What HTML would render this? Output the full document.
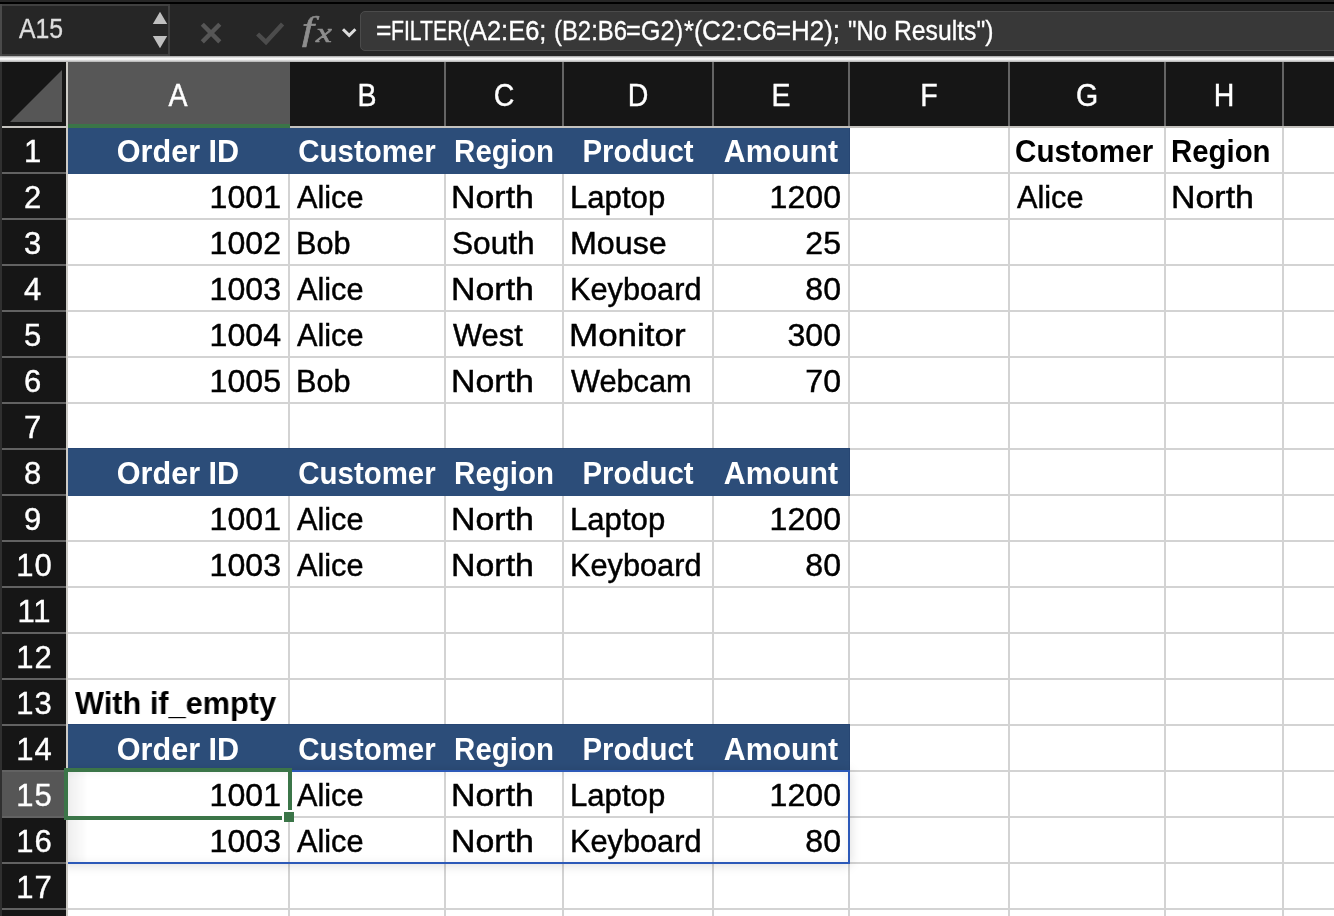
<!DOCTYPE html>
<html lang="en"><head><meta charset="utf-8"><title>FILTER</title>
<style>
html,body{margin:0;padding:0;}
body{width:1334px;height:916px;overflow:hidden;background:#fff;position:relative;font-family:"Liberation Sans",sans-serif;}
.abs{position:absolute;}
#wrap{position:absolute;left:0;top:0;width:1334px;height:916px;will-change:transform;overflow:hidden;}
#top{left:0;top:0;width:1334px;height:62px;background:#262626;}
#topblack{left:0;top:2px;width:1334px;height:2px;background:#000;}
#namebox{left:0px;top:4px;width:166px;height:48px;border:2px solid #404040;border-left-color:#4a4a4a;background:#262626;box-sizing:content-box;}
#nametext{left:19px;top:12.5px;font-size:27.5px;line-height:32px;color:#dedede;white-space:nowrap;-webkit-text-stroke:.35px #dedede;transform:scaleX(.90);transform-origin:0 0;}
#fbox{left:360px;top:11px;width:990px;height:38px;border:1px solid #4b4b4b;border-radius:5px;background:#383838;}
#ftext{left:376px;top:15px;font-size:27.5px;line-height:32px;color:#fff;white-space:nowrap;-webkit-text-stroke:.35px #fff;}
.fs{position:absolute;top:0;white-space:pre;transform-origin:0 0;}
#fx{left:301px;top:9px;font-family:"Liberation Serif",serif;font-style:italic;font-size:34px;line-height:40px;color:#8e8e8e;white-space:nowrap;-webkit-text-stroke:.6px #8e8e8e;}
#sep{left:0;top:56px;width:1334px;height:6px;background:linear-gradient(#9c9c9c 0%,#d6d6d6 20%,#fafafa 42%,#f2f2f2 58%,#cecece 80%,#b0b0b0 100%);}
#hdr{left:0;top:62px;width:1334px;height:66px;background:#161616;}
#rowhdr{left:0;top:62px;width:66px;height:854px;background:#161616;}
#leftedge{left:0;top:4px;width:2px;height:52px;background:#4a4a4a;}
#leftedge2{left:0;top:62px;width:2px;height:854px;background:#303030;}
.ch{-webkit-text-stroke:.4px #fff;transform:scaleX(.92);top:62px;height:62px;color:#fff;font-size:31px;line-height:67px;text-align:center;white-space:nowrap;}
.rh{-webkit-text-stroke:.4px #fff;left:1px;width:63px;height:46px;color:#fff;font-size:31px;line-height:48px;text-align:center;white-space:nowrap;}
.vl{top:128px;width:2px;height:788px;background:#d3d3d3;}
.hl{left:68px;width:1266px;height:2px;background:#d3d3d3;}
.hvl{top:62px;width:2px;height:64px;background:#646464;}
.rhl{left:0;width:66px;height:2px;background:#626262;}
.blue{background:#2c4d79;left:68px;width:782px;height:48px;box-shadow:inset -1px 1px 0 #274673;}
.c{-webkit-text-stroke:.45px #000;height:46px;line-height:48px;font-size:31px;color:#000;white-space:nowrap;}
.c.r{text-align:right;}
.c.h{-webkit-text-stroke:0;color:#fff;font-weight:bold;font-size:32px;line-height:46px;text-align:center;transform:scaleX(.92);}
.c.b{-webkit-text-stroke:0;font-weight:bold;font-size:32px;line-height:46px;transform-origin:0 0;}
</style></head><body><div id="wrap">

<div class="abs hl" style="top:126px"></div>
<div class="abs hl" style="top:172px"></div>
<div class="abs hl" style="top:218px"></div>
<div class="abs hl" style="top:264px"></div>
<div class="abs hl" style="top:310px"></div>
<div class="abs hl" style="top:356px"></div>
<div class="abs hl" style="top:402px"></div>
<div class="abs hl" style="top:448px"></div>
<div class="abs hl" style="top:494px"></div>
<div class="abs hl" style="top:540px"></div>
<div class="abs hl" style="top:586px"></div>
<div class="abs hl" style="top:632px"></div>
<div class="abs hl" style="top:678px"></div>
<div class="abs hl" style="top:724px"></div>
<div class="abs hl" style="top:770px"></div>
<div class="abs hl" style="top:816px"></div>
<div class="abs hl" style="top:862px"></div>
<div class="abs hl" style="top:908px"></div>
<div class="abs vl" style="left:288px"></div>
<div class="abs vl" style="left:444px"></div>
<div class="abs vl" style="left:562px"></div>
<div class="abs vl" style="left:712px"></div>
<div class="abs vl" style="left:848px"></div>
<div class="abs vl" style="left:1008px"></div>
<div class="abs vl" style="left:1164px"></div>
<div class="abs vl" style="left:1282px"></div>
<div class="abs blue" style="top:126px"></div>
<div class="abs c h" style="left:68px;width:220px;top:128px;transform:scaleX(0.956)">Order ID</div>
<div class="abs c h" style="left:290px;width:154px;top:128px;transform:scaleX(0.92)">Customer</div>
<div class="abs c h" style="left:446px;width:116px;top:128px;transform:scaleX(0.92)">Region</div>
<div class="abs c h" style="left:564px;width:148px;top:128px;transform:scaleX(0.92)">Product</div>
<div class="abs c h" style="left:714px;width:134px;top:128px;transform:scaleX(0.946)">Amount</div>
<div class="abs blue" style="top:448px"></div>
<div class="abs c h" style="left:68px;width:220px;top:450px;transform:scaleX(0.956)">Order ID</div>
<div class="abs c h" style="left:290px;width:154px;top:450px;transform:scaleX(0.92)">Customer</div>
<div class="abs c h" style="left:446px;width:116px;top:450px;transform:scaleX(0.92)">Region</div>
<div class="abs c h" style="left:564px;width:148px;top:450px;transform:scaleX(0.92)">Product</div>
<div class="abs c h" style="left:714px;width:134px;top:450px;transform:scaleX(0.946)">Amount</div>
<div class="abs blue" style="top:724px"></div>
<div class="abs c h" style="left:68px;width:220px;top:726px;transform:scaleX(0.956)">Order ID</div>
<div class="abs c h" style="left:290px;width:154px;top:726px;transform:scaleX(0.92)">Customer</div>
<div class="abs c h" style="left:446px;width:116px;top:726px;transform:scaleX(0.92)">Region</div>
<div class="abs c h" style="left:564px;width:148px;top:726px;transform:scaleX(0.92)">Product</div>
<div class="abs c h" style="left:714px;width:134px;top:726px;transform:scaleX(0.946)">Amount</div>
<div class="abs c r" style="left:68px;width:213px;top:174px;transform:scaleX(1.035);transform-origin:100% 0">1001</div>
<div class="abs c" style="left:296.6px;top:174px;transform:scaleX(0.989);transform-origin:0 0">Alice</div>
<div class="abs c" style="left:451.2px;top:174px;transform:scaleX(1.094);transform-origin:0 0">North</div>
<div class="abs c" style="left:570.3px;top:174px;transform:scaleX(1.004);transform-origin:0 0">Laptop</div>
<div class="abs c r" style="left:714px;width:127px;top:174px;transform:scaleX(1.035);transform-origin:100% 0">1200</div>
<div class="abs c r" style="left:68px;width:213px;top:220px;transform:scaleX(1.035);transform-origin:100% 0">1002</div>
<div class="abs c" style="left:295.5px;top:220px;transform:scaleX(0.988);transform-origin:0 0">Bob</div>
<div class="abs c" style="left:451.6px;top:220px;transform:scaleX(1.021);transform-origin:0 0">South</div>
<div class="abs c" style="left:570.2px;top:220px;transform:scaleX(1.040);transform-origin:0 0">Mouse</div>
<div class="abs c r" style="left:714px;width:127px;top:220px;transform:scaleX(1.035);transform-origin:100% 0">25</div>
<div class="abs c r" style="left:68px;width:213px;top:266px;transform:scaleX(1.035);transform-origin:100% 0">1003</div>
<div class="abs c" style="left:296.6px;top:266px;transform:scaleX(0.989);transform-origin:0 0">Alice</div>
<div class="abs c" style="left:451.2px;top:266px;transform:scaleX(1.094);transform-origin:0 0">North</div>
<div class="abs c" style="left:570.3px;top:266px;transform:scaleX(0.991);transform-origin:0 0">Keyboard</div>
<div class="abs c r" style="left:714px;width:127px;top:266px;transform:scaleX(1.035);transform-origin:100% 0">80</div>
<div class="abs c r" style="left:68px;width:213px;top:312px;transform:scaleX(1.035);transform-origin:100% 0">1004</div>
<div class="abs c" style="left:296.6px;top:312px;transform:scaleX(0.989);transform-origin:0 0">Alice</div>
<div class="abs c" style="left:453.0px;top:312px;transform:scaleX(0.996);transform-origin:0 0">West</div>
<div class="abs c" style="left:568.9px;top:312px;transform:scaleX(1.129);transform-origin:0 0">Monitor</div>
<div class="abs c r" style="left:714px;width:127px;top:312px;transform:scaleX(1.035);transform-origin:100% 0">300</div>
<div class="abs c r" style="left:68px;width:213px;top:358px;transform:scaleX(1.035);transform-origin:100% 0">1005</div>
<div class="abs c" style="left:295.5px;top:358px;transform:scaleX(0.988);transform-origin:0 0">Bob</div>
<div class="abs c" style="left:451.2px;top:358px;transform:scaleX(1.094);transform-origin:0 0">North</div>
<div class="abs c" style="left:571.2px;top:358px;transform:scaleX(0.991);transform-origin:0 0">Webcam</div>
<div class="abs c r" style="left:714px;width:127px;top:358px;transform:scaleX(1.035);transform-origin:100% 0">70</div>
<div class="abs c r" style="left:68px;width:213px;top:496px;transform:scaleX(1.035);transform-origin:100% 0">1001</div>
<div class="abs c" style="left:296.6px;top:496px;transform:scaleX(0.989);transform-origin:0 0">Alice</div>
<div class="abs c" style="left:451.2px;top:496px;transform:scaleX(1.094);transform-origin:0 0">North</div>
<div class="abs c" style="left:570.3px;top:496px;transform:scaleX(1.004);transform-origin:0 0">Laptop</div>
<div class="abs c r" style="left:714px;width:127px;top:496px;transform:scaleX(1.035);transform-origin:100% 0">1200</div>
<div class="abs c r" style="left:68px;width:213px;top:542px;transform:scaleX(1.035);transform-origin:100% 0">1003</div>
<div class="abs c" style="left:296.6px;top:542px;transform:scaleX(0.989);transform-origin:0 0">Alice</div>
<div class="abs c" style="left:451.2px;top:542px;transform:scaleX(1.094);transform-origin:0 0">North</div>
<div class="abs c" style="left:570.3px;top:542px;transform:scaleX(0.991);transform-origin:0 0">Keyboard</div>
<div class="abs c r" style="left:714px;width:127px;top:542px;transform:scaleX(1.035);transform-origin:100% 0">80</div>
<div class="abs c r" style="left:68px;width:213px;top:772px;transform:scaleX(1.035);transform-origin:100% 0">1001</div>
<div class="abs c" style="left:296.6px;top:772px;transform:scaleX(0.989);transform-origin:0 0">Alice</div>
<div class="abs c" style="left:451.2px;top:772px;transform:scaleX(1.094);transform-origin:0 0">North</div>
<div class="abs c" style="left:570.3px;top:772px;transform:scaleX(1.004);transform-origin:0 0">Laptop</div>
<div class="abs c r" style="left:714px;width:127px;top:772px;transform:scaleX(1.035);transform-origin:100% 0">1200</div>
<div class="abs c r" style="left:68px;width:213px;top:818px;transform:scaleX(1.035);transform-origin:100% 0">1003</div>
<div class="abs c" style="left:296.6px;top:818px;transform:scaleX(0.989);transform-origin:0 0">Alice</div>
<div class="abs c" style="left:451.2px;top:818px;transform:scaleX(1.094);transform-origin:0 0">North</div>
<div class="abs c" style="left:570.3px;top:818px;transform:scaleX(0.991);transform-origin:0 0">Keyboard</div>
<div class="abs c r" style="left:714px;width:127px;top:818px;transform:scaleX(1.035);transform-origin:100% 0">80</div>
<div class="abs c" style="left:1016.6px;top:174px;transform:scaleX(0.989);transform-origin:0 0">Alice</div>
<div class="abs c" style="left:1171.2px;top:174px;transform:scaleX(1.094);transform-origin:0 0">North</div>
<div class="abs c b" style="left:1015.4px;top:128px;transform:scaleX(0.925)">Customer</div>
<div class="abs c b" style="left:1171.0px;top:128px;transform:scaleX(0.918)">Region</div>
<div class="abs c b" style="left:75.3px;top:680px;transform:scaleX(0.960)">With if_empty</div>
<div class="abs" style="left:30px;top:770px;width:816px;height:90px;border:2px solid #2c59b8;box-shadow:0 1px 11px rgba(0,0,0,.15), inset 0 0 10px rgba(0,0,0,.06);box-sizing:content-box"></div>
<div class="abs" style="left:68px;top:772px;width:20px;height:90px;background:linear-gradient(to right,rgba(0,0,0,.065),rgba(0,0,0,0))"></div>
<div class="abs" style="left:64px;top:768px;width:220px;height:44px;border:4px solid #3b7548;box-sizing:content-box"></div>
<div class="abs" style="left:282px;top:810px;width:12px;height:12px;background:#fff"></div>
<div class="abs" style="left:288px;top:816px;width:2px;height:6px;background:#d3d3d3"></div>
<div class="abs" style="left:290px;top:816px;width:4px;height:2px;background:#d3d3d3"></div>
<div class="abs" style="left:284px;top:812px;width:10px;height:10px;background:#3b7548"></div>
<div class="abs" id="hdr"></div><div class="abs" id="rowhdr"></div>
<div class="abs" style="left:68px;top:62px;width:222px;height:62px;background:#575757"></div>
<div class="abs" style="left:0px;top:126px;width:1334px;height:2px;background:#c4c2be"></div>
<div class="abs" style="left:68px;top:124px;width:222px;height:4px;background:#3b7548"></div>
<div class="abs ch" style="left:68px;width:220px">A</div>
<div class="abs ch" style="left:290px;width:154px">B</div>
<div class="abs ch" style="left:446px;width:116px">C</div>
<div class="abs ch" style="left:564px;width:148px">D</div>
<div class="abs ch" style="left:714px;width:134px">E</div>
<div class="abs ch" style="left:850px;width:158px">F</div>
<div class="abs ch" style="left:1010px;width:154px">G</div>
<div class="abs ch" style="left:1166px;width:116px">H</div>
<div class="abs hvl" style="left:444px"></div>
<div class="abs hvl" style="left:562px"></div>
<div class="abs hvl" style="left:712px"></div>
<div class="abs hvl" style="left:848px"></div>
<div class="abs hvl" style="left:1008px"></div>
<div class="abs hvl" style="left:1164px"></div>
<div class="abs hvl" style="left:1282px"></div>
<div class="abs" style="left:2px;top:770px;width:62px;height:48px;background:#565656"></div>
<div class="abs rh" style="top:128px">1</div>
<div class="abs rhl" style="top:172px"></div>
<div class="abs rh" style="top:174px">2</div>
<div class="abs rhl" style="top:218px"></div>
<div class="abs rh" style="top:220px">3</div>
<div class="abs rhl" style="top:264px"></div>
<div class="abs rh" style="top:266px">4</div>
<div class="abs rhl" style="top:310px"></div>
<div class="abs rh" style="top:312px">5</div>
<div class="abs rhl" style="top:356px"></div>
<div class="abs rh" style="top:358px">6</div>
<div class="abs rhl" style="top:402px"></div>
<div class="abs rh" style="top:404px">7</div>
<div class="abs rhl" style="top:448px"></div>
<div class="abs rh" style="top:450px">8</div>
<div class="abs rhl" style="top:494px"></div>
<div class="abs rh" style="top:496px">9</div>
<div class="abs rhl" style="top:540px"></div>
<div class="abs rh" style="top:542px;left:3px;letter-spacing:1px">10</div>
<div class="abs rhl" style="top:586px"></div>
<div class="abs rh" style="top:588px;left:3px;letter-spacing:1px">11</div>
<div class="abs rhl" style="top:632px"></div>
<div class="abs rh" style="top:634px;left:3px;letter-spacing:1px">12</div>
<div class="abs rhl" style="top:678px"></div>
<div class="abs rh" style="top:680px;left:3px;letter-spacing:1px">13</div>
<div class="abs rhl" style="top:724px"></div>
<div class="abs rh" style="top:726px;left:3px;letter-spacing:1px">14</div>
<div class="abs rhl" style="top:770px"></div>
<div class="abs rh" style="top:772px;left:3px;letter-spacing:1px">15</div>
<div class="abs rhl" style="top:816px"></div>
<div class="abs rh" style="top:818px;left:3px;letter-spacing:1px">16</div>
<div class="abs rhl" style="top:862px"></div>
<div class="abs rh" style="top:864px;left:3px;letter-spacing:1px">17</div>
<div class="abs rhl" style="top:908px"></div>
<div class="abs rh" style="top:910px;left:3px;letter-spacing:1px">18</div>
<div class="abs" style="left:66px;top:62px;width:2px;height:854px;background:#cdcbc6"></div>
<svg class="abs" style="left:0;top:62px" width="66" height="66"><polygon points="62,8 62,60 10,60" fill="#565656"/></svg>
<div class="abs" id="top"></div><div class="abs" id="topblack"></div>
<div class="abs" id="namebox"></div><div class="abs" id="nametext">A15</div>
<svg class="abs" style="left:150px;top:8px" width="20" height="44"><polygon points="10,3.8 17.2,16 2.8,16" fill="#c0c0c0"/><polygon points="2.8,28.1 17.2,28.1 10,40.2" fill="#c0c0c0"/></svg>
<svg class="abs" style="left:195px;top:18px" width="100" height="30"><path d="M7.3 6.3 L24.8 23.9 M24.8 6.3 L7.3 23.9" stroke="#565656" stroke-width="4.4" fill="none" stroke-linecap="butt"/><path d="M62.6 16 L71 24 L87.6 6" stroke="#4c4c4c" stroke-width="4.4" fill="none"/></svg>
<div class="abs" id="fx"><span style="position:absolute;left:1px;top:0px;font-size:33.5px;transform:scaleX(1.3);transform-origin:0 0">f</span><span style="position:absolute;left:15px;top:4px;font-size:27.5px;transform:scaleX(1.3);transform-origin:0 0">x</span></div>
<svg class="abs" style="left:338px;top:24px" width="22" height="18"><path d="M5 5.3 L11.2 11.4 L17.4 5.3" stroke="#dcdcdc" stroke-width="3" fill="none"/></svg>
<div class="abs" id="fbox"></div>
<div class="abs" id="ftext">
<span class="fs" style="left:-0.1px;transform:scaleX(0.959)">=</span>
<span class="fs" style="left:15.3px;transform:scaleX(0.772)">FILTER(</span>
<span class="fs" style="left:94.4px;transform:scaleX(0.925)">A2:E6; </span>
<span class="fs" style="left:177.8px;transform:scaleX(0.868)">(B2:B6</span>
<span class="fs" style="left:250.3px;transform:scaleX(0.922)">=G2)</span>
<span class="fs" style="left:307.9px;transform:scaleX(0.926)">*(</span>
<span class="fs" style="left:326.3px;transform:scaleX(0.952)">C2:C6</span>
<span class="fs" style="left:400.0px;transform:scaleX(0.941)">=H2); </span>
<span class="fs" style="left:471.7px;transform:scaleX(0.871)">&quot;No </span>
<span class="fs" style="left:517.5px;transform:scaleX(0.899)">Results&quot;)</span>
</div>
<div class="abs" id="sep"></div>
<div class="abs" id="leftedge"></div><div class="abs" id="leftedge2"></div>
<div class="abs" style="left:64px;top:768px;width:4px;height:52px;background:#3b7548"></div>
</div></body></html>
